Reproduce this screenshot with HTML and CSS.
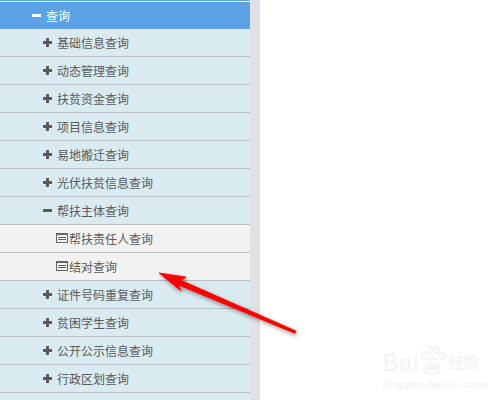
FILE: index.html
```html
<!DOCTYPE html>
<html lang="zh-CN">

<head>
  <meta charset="UTF-8">
  <title>查询</title>
  <link rel="stylesheet" href="styles.css">
</head>

<body>
<div class="page">
  <div class="sidebar">
    <div class="topLine"></div>
    <div class="menuHead"><span class="sign minus white"></span>查询</div>
    <div class="row"><span class="sign plus"></span>基础信息查询</div>
    <div class="row"><span class="sign plus"></span>动态管理查询</div>
    <div class="row"><span class="sign plus"></span>扶贫资金查询</div>
    <div class="row"><span class="sign plus"></span>项目信息查询</div>
    <div class="row"><span class="sign plus"></span>易地搬迁查询</div>
    <div class="row"><span class="sign plus"></span>光伏扶贫信息查询</div>
    <div class="row"><span class="sign minus"></span>帮扶主体查询</div>
    <div class="row sub">
      <svg class="listIcon" width="12" height="10" viewBox="0 0 12 10"><rect x="0.5" y="0.5" width="11" height="9" fill="#f2f2f2" stroke="#666"/><path d="M0 1.5h12M2 4.5h8M2 6.5h8" stroke="#666" fill="none"/></svg>
      帮扶责任人查询
    </div>
    <div class="row sub">
      <svg class="listIcon" width="12" height="10" viewBox="0 0 12 10"><rect x="0.5" y="0.5" width="11" height="9" fill="#f2f2f2" stroke="#666"/><path d="M0 1.5h12M2 4.5h8M2 6.5h8" stroke="#666" fill="none"/></svg>
      结对查询
    </div>
    <div class="row"><span class="sign plus"></span>证件号码重复查询</div>
    <div class="row"><span class="sign plus"></span>贫困学生查询</div>
    <div class="row"><span class="sign plus"></span>公开公示信息查询</div>
    <div class="row"><span class="sign plus"></span>行政区划查询</div>
    <div class="row"></div>
  </div>
  <div class="gutter"></div>
</div>

<!-- annotation on top of the screenshot -->
<svg class="arrow" width="500" height="400" viewBox="0 0 500 400">
  <defs>
    <filter id="soft" x="-20%" y="-20%" width="140%" height="140%">
      <feDropShadow dx="1" dy="2" stdDeviation="2" flood-color="#000" flood-opacity="0.4"/>
    </filter>
  </defs>
  <path d="M159 273L186 277L181.500 280.500L296 331L295 333.500L178.500 285L181 291Z" fill="#f00" stroke="#f00" stroke-width="0.8" stroke-linejoin="round" filter="url(#soft)"/>
</svg>

<!-- faint watermark, bottom right -->
<div class="mark">
  <div class="markTop">
    <span class="markBai">Bai</span>
    <svg class="markPaw" width="26" height="30" viewBox="0 0 26 30">
      <g fill="none" stroke="#f2f2f2" stroke-width="1.500">
        <ellipse cx="5" cy="9" rx="2.500" ry="3.500"/>
        <ellipse cx="11" cy="4" rx="2.500" ry="3.500"/>
        <ellipse cx="18" cy="4" rx="2.500" ry="3.500"/>
        <ellipse cx="23" cy="10" rx="2.500" ry="3.500"/>
        <path d="M13 12C8 12 4 19 5 24C6 29 20 29 21 24C22 19 18 12 13 12Z"/>
      </g>
      <text x="13" y="24" text-anchor="middle" class="markDu">du</text>
    </svg>
    <span class="markJy">经验</span>
  </div>
  <div class="markUrl">jingyan.baidu.com</div>
</div>
</body>

</html>
```

FILE: styles.css
```css
html {
  --blue: #5ba3e6;
  --rowBg: #d9ebf0;
  --subBg: #f2f2f2;
  --line: #bdbdc4;
  --text: #5a5a5a;
}

body {
  margin: 0;
  height: 400px;
  overflow: hidden;
  background: #fff;
  font-family: "Liberation Sans", "Noto Sans CJK SC", sans-serif;
  font-size: 12px;
  color: var(--text);
}

.page {
  display: flex;
  height: 400px;
}

.sidebar {
  width: 250px;
  overflow: hidden;
}

.gutter {
  width: 10px;
  background: #e0e0e6;
}

.topLine {
  height: 1px;
  background: var(--blue);
  border-bottom: 1px solid #fff;
}

.menuHead {
  display: flex;
  align-items: center;
  height: 26px;
  padding-bottom: 1px;
  padding-left: 32px;
  background: var(--blue);
  color: #fff;
}

.row {
  display: flex;
  align-items: center;
  flex-shrink: 0;
  height: 26px;
  padding-bottom: 1px;
  padding-left: 43px;
  background: var(--rowBg);
  border-bottom: 1px solid var(--line);
}

.sub {
  padding-left: 56px;
  background: var(--subBg);
}

.sign {
  position: relative;
  width: 10px;
  height: 9px;
  margin-right: 4px;
}

.sign::before,
.plus::after {
  content: "";
  position: absolute;
  left: 0;
  top: 3px;
  width: 9px;
  height: 3px;
  background: var(--text);
}

.plus::after {
  left: 3px;
  top: 0;
  width: 3px;
  height: 9px;
}

.white::before {
  background: #fff;
}

.listIcon {
  margin-right: 1px;
}

.arrow {
  position: absolute;
  left: 0;
  top: 0;
}

.mark {
  position: absolute;
  left: 383px;
  top: 346px;
  width: 100px;
  color: #f3f3f3;
}

.markTop {
  display: flex;
  align-items: flex-end;
}

.markBai {
  font-size: 23px;
  line-height: 26px;
  letter-spacing: 1px;
}

.markPaw {
  margin-right: 3px;
}

.markDu {
  font-size: 10px;
  font-weight: bold;
  fill: #eee;
}

.markJy {
  font-size: 15px;
  line-height: 26px;
  font-weight: bold;
}

.markUrl {
  margin-top: 2px;
  font-size: 11px;
  font-weight: bold;
  letter-spacing: 0.4px;
}
```
